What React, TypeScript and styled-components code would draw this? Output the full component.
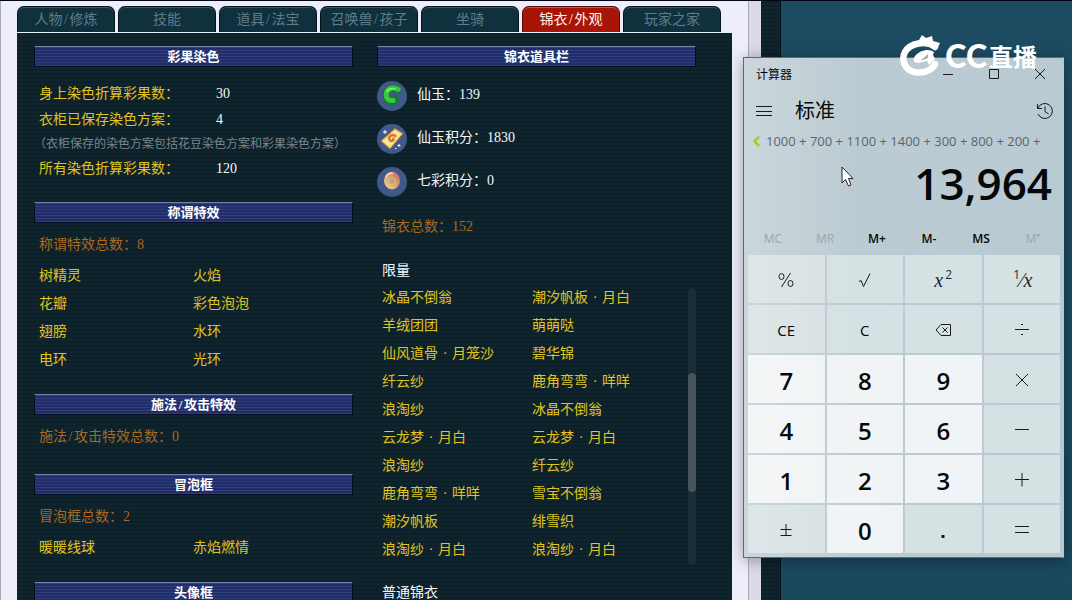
import React from "react";
import styled, { createGlobalStyle, css } from "styled-components";

const song = `"Liberation Serif", "Noto Sans CJK SC", serif`;
const ui = `"Open Sans", "Noto Sans CJK SC", sans-serif`;

const stripes = css`
  background: repeating-linear-gradient(180deg, #0c202a 0 2px, #0f242d 2px 4px);
`;

const GlobalStyle = createGlobalStyle`
  * { box-sizing: border-box; }
  body { margin: 0; background: #1b4a5f; }
  button { font: inherit; color: inherit; border: 0; padding: 0; background: none; cursor: pointer; }
  ul, dl, dd, h2, h3, p { margin: 0; padding: 0; list-style: none; }
`;

const Desktop = styled.div`
  position: relative;
  display: flex;
  height: 100vh;
  overflow: hidden;
  border-top: 1px solid #020417;
  background: linear-gradient(180deg, #1d4c62, #1a485d);
`;

const Browser = styled.div`
  flex: 1;
  display: flex;
  margin-right: 291px;
  border-left: 1px solid #aaa9b4;
  background: #eeeefb;
`;

const Page = styled.main`
  flex: 1;
  display: flex;
  flex-direction: column;
  padding: 5px 16px 0;
`;

const PageScroll = styled.div`
  width: 13px;
  border-left: 1px solid #a9a9b5;
  background: #dadae6;
`;

const PageEdge = styled.div`
  width: 20px;
  border-right: 1px solid #07141b;
  ${stripes}
`;

const Tabs = styled.nav`
  display: flex;
  gap: 3px;
  padding-right: 11px;
`;

const Tab = styled.button<{ $active?: boolean }>`
  flex: 1;
  height: 26px;
  border: 1px solid ${(p) => (p.$active ? "#4c0d0c" : "#07151c")};
  border-bottom: 0;
  border-radius: 7px 7px 0 0;
  box-shadow: inset 0 1px 0 ${(p) => (p.$active ? "#c9584d" : "#3d5964")};
  background: ${(p) => (p.$active ? "#a81507" : "#10303e")};
  color: ${(p) => (p.$active ? "#fff3ee" : "#5d7d8d")};
  font: 14px/24px ${song};
  white-space: nowrap;
`;

const Panel = styled.div`
  flex: 1;
  display: grid;
  grid-template-columns: 1fr 1fr;
  align-items: start;
  gap: 24px;
  padding: 13px 36px 0 17px;
  border-top: 1px solid #e9f3f7;
  ${stripes}
  color: #e0c41e;
  font: 14px/26px ${song};
`;

const SectionTitle = styled.h2`
  height: 21px;
  border: 1px solid #050c20;
  border-top-color: #7482ad;
  background: repeating-linear-gradient(180deg, #2f3e7c 0 1px, #202d68 1px 3px);
  color: #fff;
  font: bold 13px/19px ${song};
  text-align: center;
`;

const Section = styled.section`
  margin-bottom: 20px;
`;

const Stats = styled.dl`
  padding: 14px 0 0 5px;
`;

const Stat = styled.div`
  display: grid;
  grid-template-columns: 177px 1fr;

  dd { color: #f4f8fa; }
`;

const Note = styled.dd`
  margin-left: -5px;
  color: #7b868c;
  font-size: 12px;
  line-height: 23px;
  white-space: nowrap;
`;

const Total = styled.p<{ $wardrobe?: boolean }>`
  padding: ${(p) => (p.$wardrobe ? "11px 0 18px 5px" : "9px 0 0 5px")};
  color: #ab6920;
`;

const Names = styled.ul<{ $wardrobe?: boolean }>`
  flex: 1;
  display: grid;
  grid-template-columns: ${(p) => (p.$wardrobe ? "150px" : "154px")} 1fr;
  margin-top: ${(p) => (p.$wardrobe ? "0" : "4px")};
  padding-left: 5px;
  line-height: 28px;
  white-space: nowrap;
`;

const Mark = styled.span<{ $wide?: boolean }>`
  display: inline-block;
  width: ${(p) => (p.$wide ? "14px" : "7px")};
  text-align: center;
`;

const Currencies = styled.ul`
  padding-top: 7px;
`;

const Currency = styled.li`
  display: flex;
  align-items: center;
  gap: 10px;
  height: 43px;
  color: #f4f8fa;

  span { padding-bottom: 2px; }
`;

const GroupTitle = styled.h3`
  padding-left: 5px;
  color: #f4f8fa;
  font: inherit;
`;

const Wardrobe = styled.div`
  display: flex;
  margin-bottom: 16px;
`;

const ListTrack = styled.div`
  width: 8px;
  margin: 4px 0 -1px;
  padding-top: 85px;
  border-radius: 4px;
  background: #1b2d36;
`;

const ListThumb = styled.div`
  height: 119px;
  border-radius: 4px;
  background: #46545b;
`;

const Calculator = styled.section`
  position: absolute;
  top: 56px;
  right: 8px;
  width: 321px;
  padding-bottom: 4px;
  border: 1px solid #5d6c73;
  border-right-color: #b3c8d0;
  box-shadow: 0 2px 14px rgba(0, 0, 0, 0.35);
  background: linear-gradient(90deg, #cbd6dc, #bccbd2 35%, #b8cad2);
  color: #050708;
  font-family: ${ui};
`;

const TitleBar = styled.header`
  display: flex;
  align-items: center;
  height: 32px;
  padding-left: 12px;
  font-size: 12px;
`;

const AppName = styled.span`
  flex: 1;
`;

const CaptionButton = styled.button`
  display: grid;
  place-items: center;
  width: 46px;
  height: 32px;
`;

const ModeBar = styled.div`
  display: flex;
  align-items: center;
  height: 41px;
  padding: 0 9px 0 12px;

  h2 {
    flex: 1;
    padding-left: 23px;
    font-size: 20px;
    font-weight: 400;
    line-height: 28px;
  }
`;

const IconButton = styled.button`
  display: grid;
  place-items: center;
`;

const Expression = styled.div`
  display: flex;
  align-items: center;
  gap: 5px;
  height: 20px;
  padding-left: 8px;
  color: #58666d;
  font-size: 13px;
  white-space: nowrap;
`;

const Result = styled.output`
  display: block;
  padding-right: 11px;
  font-size: 44px;
  font-weight: 600;
  line-height: 64px;
  height: 70px;
  text-align: right;
`;

const MemoryRow = styled.div`
  display: grid;
  grid-template-columns: repeat(6, 1fr);
  height: 34px;
  padding: 0 4px 0 3px;
`;

const MemoryButton = styled.button`
  font-size: 12px;
  font-weight: 600;

  &:disabled { color: #98a7ae; font-weight: 400; }
  sup { font-size: 8px; line-height: 8px; }
`;

const Keypad = styled.div`
  display: grid;
  grid-template-columns: repeat(4, 1fr);
  grid-auto-rows: 48px;
  gap: 2px;
  padding: 0 3px 0 4px;
`;

const Key = styled.button<{ $digit?: boolean }>`
  display: flex;
  align-items: center;
  justify-content: center;
  padding-top: ${(p) => (p.$digit ? "2px" : "1px")};
  background: ${(p) => (p.$digit ? "rgba(255,255,255,0.78)" : "rgba(235,242,240,0.56)")};
  font-size: ${(p) => (p.$digit ? "24px" : "15px")};
  font-weight: ${(p) => (p.$digit ? 600 : 400)};
`;

const MathLabel = styled.span`
  color: #20282c;
  font: italic 20px/24px "Liberation Serif", serif;

  sup { font: 12px/12px ${ui}; margin-left: 2px; }
`;

const Pointer = styled.svg`
  position: absolute;
  top: 165px;
  right: 218px;
`;

const Watermark = styled.div`
  position: absolute;
  top: 33px;
  right: 35px;
  display: flex;
  align-items: center;
  color: #fff;
  pointer-events: none;
`;

const BrandLatin = styled.span`
  padding-left: 3px;
  font: 900 32px/44px Lato, sans-serif;
`;

const BrandHan = styled.span`
  padding-left: 2px;
  font: bold 24px/44px "Noto Sans CJK SC", sans-serif;
`;

const tabs = ["人物/修炼", "技能", "道具/法宝", "召唤兽/孩子", "坐骑", "锦衣/外观", "玩家之家"];

const titleEffects = ["树精灵", "火焰", "花瓣", "彩色泡泡", "翅膀", "水环", "电环", "光环"];
const bubbles = ["暖暖线球", "赤焰燃情"];
const limited = [
  "冰晶不倒翁", "潮汐帆板·月白",
  "羊绒团团", "萌萌哒",
  "仙风道骨·月笼沙", "碧华锦",
  "纤云纱", "鹿角弯弯·咩咩",
  "浪淘纱", "冰晶不倒翁",
  "云龙梦·月白", "云龙梦·月白",
  "浪淘纱", "纤云纱",
  "鹿角弯弯·咩咩", "雪宝不倒翁",
  "潮汐帆板", "绯雪织",
  "浪淘纱·月白", "浪淘纱·月白",
];

// Slashes take half an em and middle dots a full em, as in a Song typeface.
function Label({ text }: { text: string }) {
  return (
    <>
      {text.split(/([/·])/).map((part, i) =>
        part === "/" || part === "·" ? <Mark key={i} $wide={part === "·"}>{part}</Mark> : part
      )}
    </>
  );
}

function NameList({ items, wardrobe }: { items: string[]; wardrobe?: boolean }) {
  return (
    <Names $wardrobe={wardrobe}>
      {items.map((name, i) => <li key={i}><Label text={name} /></li>)}
    </Names>
  );
}

function EffectSection({ title, total, items = [] }: { title: string; total?: string; items?: string[] }) {
  return (
    <Section>
      <SectionTitle><Label text={title} /></SectionTitle>
      {total && <Total><Label text={total} /></Total>}
      <NameList items={items} />
    </Section>
  );
}

function JadeIcon() {
  return (
    <svg width="30" height="30" viewBox="0 0 30 30" aria-hidden="true">
      <circle cx="15" cy="15" r="15" fill="#40588a" />
      <path d="M21 9C17 5.500 10.500 7 9.500 12.500C8.500 18 12 21 16.500 20C18 19.500 18.500 18.500 18 18" fill="none" stroke="#167c24" strokeWidth="7" strokeLinecap="round" />
      <path d="M21 8.500C17 5.500 10.500 7 9.500 12C8.500 17 11.500 20 16 19.500" fill="none" stroke="#35c93c" strokeWidth="5" strokeLinecap="round" />
      <path d="M10 10.500C12 7.500 15 7 18 8" fill="none" stroke="#87ec77" strokeWidth="1.500" strokeLinecap="round" />
    </svg>
  );
}

function VoucherIcon() {
  return (
    <svg width="30" height="30" viewBox="0 0 30 30" aria-hidden="true">
      <circle cx="15" cy="15" r="15" fill="#40588a" />
      <path d="M4 17L18 4.500L26 9.500L13 25Z" fill="#f1d873" stroke="#a97d33" />
      <path d="M6.500 17L18 6.500L24 10L13 22.500Z" fill="#f8e9a2" />
      <path d="M18.500 12C15 9.500 11 12.500 12.500 15.500C13.500 18 17 17 16.500 14.500" fill="none" stroke="#dd7628" strokeWidth="2.500" strokeLinecap="round" />
      <path d="M8 6v4M6 8h4M22 20v3M20.500 21.500h3M18 24.500h1.500" stroke="#fff" />
    </svg>
  );
}

function PearlIcon() {
  return (
    <svg width="30" height="30" viewBox="0 0 30 30" aria-hidden="true">
      <defs>
        <linearGradient id="pearl" x1="0" y1="1" x2="1" y2="0">
          <stop offset="0" stopColor="#f0d98c" />
          <stop offset="0.500" stopColor="#d9a877" />
          <stop offset="1" stopColor="#c9575e" />
        </linearGradient>
      </defs>
      <circle cx="15" cy="15" r="15" fill="#40588a" />
      <ellipse cx="15" cy="13.500" rx="8" ry="9" fill="url(#pearl)" />
      <ellipse cx="15.500" cy="14" rx="3" ry="3.500" fill="#c0a56d" stroke="#dcb587" />
      <path d="M9 10C11 6.500 14 6 16 6.500" fill="none" stroke="#f7dfbd" strokeWidth="1.500" />
    </svg>
  );
}

function Glyph({ d, size = 16, width = 1 }: { d: string; size?: number; width?: number }) {
  return (
    <svg width={size} height={size} viewBox={`0 0 ${size} ${size}`} fill="none" stroke="#161c20" strokeWidth={width} aria-hidden="true">
      <path d={d} />
    </svg>
  );
}

type KeyDef = { name: string; digit?: boolean; face?: React.ReactNode };

const digit = (n: string): KeyDef => ({ name: n, digit: true });

const keys: KeyDef[] = [
  { name: "百分比", face: <Glyph d="M12.500 1L3.500 15M1 4.500a2.500 3 0 1 0 5 0a2.500 3 0 1 0 -5 0M10 11.500a2.500 3 0 1 0 5 0a2.500 3 0 1 0 -5 0" /> },
  { name: "平方根", face: <Glyph d="M2 9.500L4 8.500L6.500 14.500L13 1.500" /> },
  { name: "平方", face: <MathLabel>x<sup>2</sup></MathLabel> },
  { name: "倒数", face: <MathLabel><sup>1</sup>⁄x</MathLabel> },
  { name: "CE" },
  { name: "C" },
  { name: "退格", face: <Glyph d="M6 2.500H15.500V13.500H6L1 8ZM7.500 5.500L12.500 10.500M12.500 5.500L7.500 10.500" /> },
  { name: "除", face: <Glyph d="M1 7.500H15M7 2.500H9M7 12.500H9" /> },
  digit("7"), digit("8"), digit("9"),
  { name: "乘", face: <Glyph d="M2 2L14 14M14 2L2 14" /> },
  digit("4"), digit("5"), digit("6"),
  { name: "减", face: <Glyph d="M1 7.500H15" /> },
  digit("1"), digit("2"), digit("3"),
  { name: "加", face: <Glyph d="M1 7.500H15M8 1V14.500" /> },
  { name: "正负", face: <Glyph d="M2.500 7.500H13.500M8 2V13M2.500 13.500H13.500" /> },
  digit("0"),
  { name: "小数点", face: <Glyph d="M8 13V16" width={3} /> },
  { name: "等于", face: <Glyph d="M1 4.500H15M1 10.500H15" /> },
];

export default function App() {
  return (
    <>
      <GlobalStyle />
      <Desktop>
        <Browser>
          <Page>
            <Tabs>
              {tabs.map((t) => (
                <Tab key={t} type="button" $active={t === "锦衣/外观"}><Label text={t} /></Tab>
              ))}
            </Tabs>
            <Panel>
              <div>
                <Section>
                  <SectionTitle>彩果染色</SectionTitle>
                  <Stats>
                    <Stat><dt>身上染色折算彩果数：</dt><dd>30</dd></Stat>
                    <Stat><dt>衣柜已保存染色方案：</dt><dd>4</dd></Stat>
                    <Note>（衣柜保存的染色方案包括花豆染色方案和彩果染色方案）</Note>
                    <Stat><dt>所有染色折算彩果数：</dt><dd>120</dd></Stat>
                  </Stats>
                </Section>
                <EffectSection title="称谓特效" total="称谓特效总数：8" items={titleEffects} />
                <EffectSection title="施法/攻击特效" total="施法/攻击特效总数：0" />
                <EffectSection title="冒泡框" total="冒泡框总数：2" items={bubbles} />
                <EffectSection title="头像框" />
              </div>
              <div>
                <SectionTitle>锦衣道具栏</SectionTitle>
                <Currencies>
                  <Currency><JadeIcon /><span>仙玉：139</span></Currency>
                  <Currency><VoucherIcon /><span>仙玉积分：1830</span></Currency>
                  <Currency><PearlIcon /><span>七彩积分：0</span></Currency>
                </Currencies>
                <Total $wardrobe>锦衣总数：152</Total>
                <GroupTitle>限量</GroupTitle>
                <Wardrobe>
                  <NameList items={limited} wardrobe />
                  <ListTrack><ListThumb /></ListTrack>
                </Wardrobe>
                <GroupTitle>普通锦衣</GroupTitle>
              </div>
            </Panel>
          </Page>
          <PageScroll />
          <PageEdge />
        </Browser>

        <Calculator aria-label="计算器">
          <TitleBar>
            <AppName>计算器</AppName>
            <CaptionButton type="button" aria-label="最小化"><Glyph size={10} d="M0 5.500H10" /></CaptionButton>
            <CaptionButton type="button" aria-label="最大化"><Glyph size={10} d="M0.500 0.500H9.500V9.500H0.500Z" /></CaptionButton>
            <CaptionButton type="button" aria-label="关闭"><Glyph size={12} d="M1 1L11 11M11 1L1 11" /></CaptionButton>
          </TitleBar>
          <ModeBar>
            <IconButton type="button" aria-label="导航"><Glyph d="M0 3.500H16M0 8.500H16M0 12.500H16" /></IconButton>
            <h2>标准</h2>
            <IconButton type="button" aria-label="历史记录">
              <Glyph size={18} d="M1.500 2V6.500H6M1.800 6.500A7.500 7.500 0 1 1 2 12M9 4.500V9.500L12.500 12" />
            </IconButton>
          </ModeBar>
          <Expression>
            <svg width="9" height="12" viewBox="0 0 9 12" fill="none" stroke="#a3cb2c" strokeWidth="2.500" aria-hidden="true">
              <path d="M7 1.500L2.500 6.500L7 11" />
            </svg>
            1000 + 700 + 1100 + 1400 + 300 + 800 + 200 +
          </Expression>
          <Result>13,964</Result>
          <MemoryRow>
            <MemoryButton type="button" disabled>MC</MemoryButton>
            <MemoryButton type="button" disabled>MR</MemoryButton>
            <MemoryButton type="button">M+</MemoryButton>
            <MemoryButton type="button">M-</MemoryButton>
            <MemoryButton type="button">MS</MemoryButton>
            <MemoryButton type="button" disabled>M<sup>▾</sup></MemoryButton>
          </MemoryRow>
          <Keypad>
            {keys.map((k) => (
              <Key key={k.name} type="button" $digit={k.digit} aria-label={k.name}>
                {k.face ?? k.name}
              </Key>
            ))}
          </Keypad>
        </Calculator>

        <Pointer width="13" height="21" viewBox="0 0 13 21" aria-hidden="true">
          <path d="M1 1V17L4.500 13.500L7.500 20L10 19L7.500 12.500H12Z" fill="#fff" stroke="#20262c" />
        </Pointer>

        <Watermark>
          <svg width="42" height="44" viewBox="0 0 42 44" aria-hidden="true">
            <path d="M19 6L22 1L26 4L32 2L33 7L40 9L38 13L28 10L18 9Z" fill="#fff" />
            <path d="M35 13C26 6 10 9 5 18C0 28 7 38 17 38.500C26 39 33 35 35 30" fill="none" stroke="#fff" strokeWidth="6.500" strokeLinecap="round" />
            <path d="M34 18C29 14 20 16 15 22C12 26 14 29 18 29L27 27L29 31L35 25L33 21Z" fill="#fff" />
            <path d="M28 20L20 27L28 24Z" fill="#9fb4bd" />
          </svg>
          <BrandLatin>CC</BrandLatin>
          <BrandHan>直播</BrandHan>
        </Watermark>
      </Desktop>
    </>
  );
}
